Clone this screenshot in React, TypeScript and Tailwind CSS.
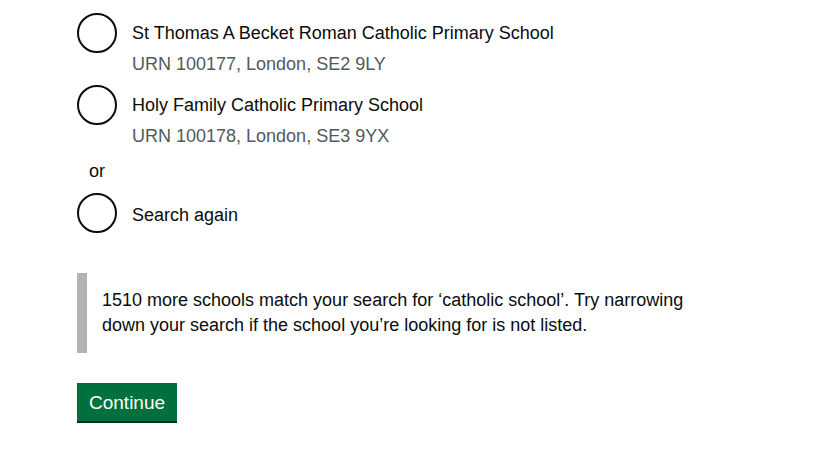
const schools = [
  { name: 'St Thomas A Becket Roman Catholic Primary School', hint: 'URN 100177, London, SE2 9LY' },
  { name: 'Holy Family Catholic Primary School', hint: 'URN 100178, London, SE3 9YX' },
];

function Radio({ label, hint }: { label: string; hint?: string }) {
  return (
    <label className="flex gap-[15px] cursor-pointer">
      <span className="w-10 h-10 shrink-0 rounded-full border-2 border-[#0b0c0c] bg-white" />
      <span className="flex flex-col">
        <span className={`leading-[25px] ${hint ? 'pt-[8px] pb-[6px]' : 'pt-[10px] pb-[3px]'}`}>{label}</span>
        {hint && <span className="leading-[25px] text-[#505a5f]">{hint}</span>}
      </span>
    </label>
  );
}

export default function App() {
  return (
    <div className="min-h-screen bg-white text-[#0b0c0c] text-[18px] pl-[77px] pt-[13px] font-['Liberation_Sans',Arial,sans-serif]">
      <div className="flex flex-col">
        {schools.map(s => (
          <div key={s.hint} className="mb-[8px]">
            <Radio label={s.name} hint={s.hint} />
          </div>
        ))}
        <div className="w-10 text-center leading-[25px] mt-[2px] mb-[9px]">or</div>
        <Radio label="Search again" />
      </div>

      <div className="mt-[40px] border-l-[10px] border-[#b1b4b6] pl-[15px] py-[15px] max-w-[640px] leading-[25px]">
        1510 more schools match your search for ‘catholic school’. Try narrowing down your search if
        the school you’re looking for is not listed.
      </div>

      <button className="mt-[30px] bg-[#00703c] text-white text-[19px] px-[10px] pt-[8px] pb-[7px] border-2 border-transparent leading-[19px] shadow-[0_2px_0_#002d18]">
        Continue
      </button>
    </div>
  );
}
